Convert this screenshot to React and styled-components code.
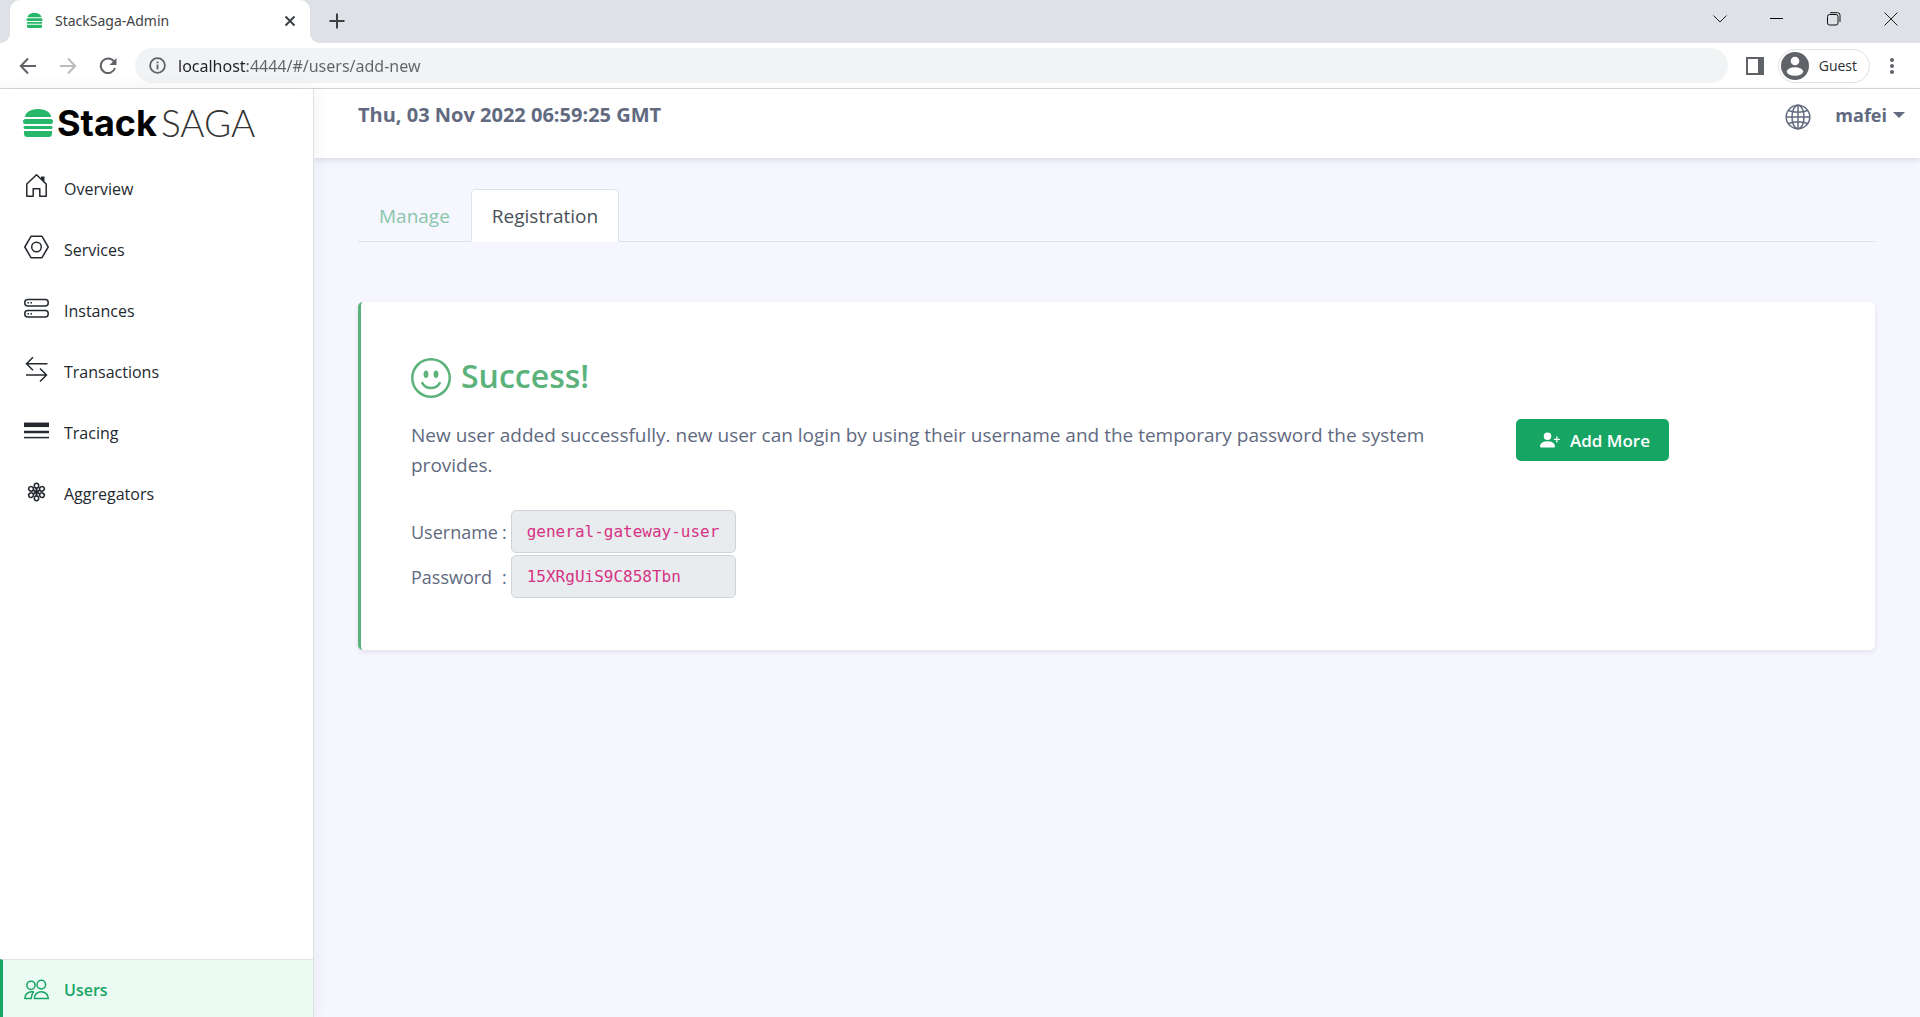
import React from "react";
import styled, { createGlobalStyle } from "styled-components";
import { BsEmojiSmile, BsPersonPlusFill } from "react-icons/bs";

const green = "#17a563";
const softGreen = "#5bb27b";
const slate = "#616a7f";
const ink = "#24292f";

const GlobalStyle = createGlobalStyle`
  *, *::before, *::after { box-sizing: border-box; }
  html, body { margin: 0; }
  body, button, input {
    font-family: "Open Sans", "Noto Sans", sans-serif;
  }
  svg { display: block; flex: none; }
`;

const Window = styled.div`
  min-height: 100vh;
  display: flex;
  flex-direction: column;
  background: #f5f6fe;
`;

/* ---------- browser frame ---------- */

const TabStrip = styled.div`
  height: 43px;
  display: flex;
  background: #dee1e6;
  padding-left: 10px;
`;

const BrowserTab = styled.div`
  position: relative;
  width: 300px;
  display: flex;
  align-items: center;
  gap: 12px;
  padding: 0 12px 2px 16px;
  background: #fff;
  border-radius: 10px 10px 0 0;
  color: #3f4347;
  font-size: 14px;

  &::before, &::after {
    content: "";
    position: absolute;
    bottom: 0;
    width: 10px;
    height: 10px;
  }
  &::before {
    left: -10px;
    background: radial-gradient(circle at 0 0, transparent 10px, #fff 10px);
  }
  &::after {
    right: -10px;
    background: radial-gradient(circle at 100% 0, transparent 10px, #fff 10px);
  }
`;

const TabTitle = styled.span`
  flex: 1;
  font-family: "Noto Sans", sans-serif;
`;

const IconButton = styled.button`
  display: grid;
  place-items: center;
  width: ${(p) => p.$w || 40}px;
  height: ${(p) => p.$h || 34}px;
  padding: 0;
  border: 0;
  background: none;
  color: ${(p) => p.$color || "#5f6368"};
`;

const WindowControls = styled.div`
  display: flex;
  margin-left: auto;
`;

const Toolbar = styled.div`
  height: 46px;
  display: flex;
  align-items: center;
  padding: 0 12px 0 8px;
  background: #fff;
  border-bottom: 1px solid #d4d6d9;
`;

const AddressBar = styled.div`
  flex: 1;
  height: 35px;
  display: flex;
  align-items: center;
  gap: 12px;
  margin: 0 4px 0 7px;
  padding: 0 14px;
  border-radius: 18px;
  background: #f1f3f4;
  color: #5f6368;
`;

const AddressInput = styled.input`
  flex: 1;
  min-width: 0;
  height: 30px;
  padding: 0;
  border: 0;
  outline: 0;
  font-family: "Noto Sans", sans-serif;
  font-size: 16px;
  color: transparent;
  background: linear-gradient(90deg, #202124 69px, #5f6368 69px);
  background-clip: text;
  -webkit-background-clip: text;
`;

const GuestChip = styled.button`
  height: 34px;
  display: flex;
  align-items: center;
  gap: 10px;
  padding: 0 12px 0 2px;
  margin-right: 6px;
  border: 1px solid #dfe1e4;
  border-radius: 17px;
  background: #fff;
  color: #2a2c30;
  font-size: 14px;
`;

/* ---------- application ---------- */

const Shell = styled.div`
  flex: 1;
  display: flex;
`;

const Sidebar = styled.aside`
  position: relative;
  width: 314px;
  flex: none;
  display: flex;
  flex-direction: column;
  background: #fff;
  border-right: 1px solid #dfe0e6;
  box-shadow: 0 0 16px rgba(40, 40, 70, 0.07);
`;

const Brand = styled.a`
  height: 69px;
  display: flex;
  align-items: center;
  gap: 4px;
  padding: 0 0 2px 23px;
  color: #000;
  text-decoration: none;
`;

const BrandBold = styled.span`
  font: 700 36px/40px Inter, sans-serif;
`;

const BrandThin = styled.span`
  color: #333;
  font: 300 37px/40px Lato, sans-serif;
`;

const Menu = styled.nav`
  flex: 1;
  display: flex;
  flex-direction: column;
`;

const MenuLink = styled.a`
  height: 61px;
  display: flex;
  align-items: center;
  gap: 14px;
  padding-left: 24px;
  color: ${ink};
  font-size: 16px;
  text-decoration: none;

  svg { margin-bottom: 5px; }
`;

const UsersLink = styled(MenuLink)`
  height: 58px;
  margin-top: auto;
  padding: 3px 0 0 21px;
  border-top: 1px solid #dfe3e3;
  border-left: 3px solid ${green};
  background: #ebfbf4;
  color: ${green};
  font-weight: 600;
`;

const Content = styled.div`
  flex: 1;
  min-width: 0;
`;

const TopBar = styled.header`
  height: 69px;
  display: flex;
  justify-content: space-between;
  align-items: flex-start;
  padding: 11px 15px 0 44px;
  background: #fff;
  box-shadow: 0 2px 6px rgba(40, 40, 70, 0.14);
  color: ${slate};
  font-size: 20px;
  line-height: 30px;
  font-weight: 700;
`;

const TopActions = styled.div`
  display: flex;
  align-items: flex-end;
  gap: 24px;
  font-size: 18px;
`;

const PlainButton = styled.button`
  display: flex;
  align-items: center;
  gap: 6px;
  padding: 0;
  border: 0;
  background: none;
  color: inherit;
  font-size: inherit;
  font-weight: inherit;
  line-height: inherit;
`;

const Caret = styled.span`
  border: 6px solid transparent;
  border-top-color: currentColor;
  border-bottom: 0;
`;

const Main = styled.main`
  padding: 31px 45px 40px 44px;
`;

const Tabs = styled.nav`
  display: flex;
  border-bottom: 1px solid #dee2e9;
`;

const TabLink = styled.a`
  margin-bottom: -1px;
  padding: 11px 20px 10px;
  border: 1px solid ${(p) => (p.$active ? "#dee2e9" : "transparent")};
  border-bottom-color: ${(p) => (p.$active ? "#fff" : "transparent")};
  border-radius: 5px 5px 0 0;
  background: ${(p) => (p.$active ? "#fff" : "none")};
  color: ${(p) => (p.$active ? "#495057" : "#8ac6ac")};
  font-size: 19px;
  line-height: 30px;
  text-decoration: none;
`;

const Card = styled.section`
  display: flex;
  align-items: flex-start;
  gap: 80px;
  margin-top: 60px;
  padding: 50px 51px 52px 50px;
  border-left: 3px solid ${softGreen};
  border-radius: 5px;
  background: #fff;
  box-shadow: 0 2px 5px rgba(40, 40, 70, 0.1);
  color: ${slate};
`;

const Message = styled.div`
  flex: 0 1 1025px;
`;

const Heading = styled.h2`
  display: flex;
  align-items: center;
  gap: 10px;
  margin: 0 0 20px;
  color: ${softGreen};
  font-size: 32px;
  line-height: 48px;
  font-weight: 600;

  svg { margin-top: 4px; }
`;

const Text = styled.p`
  margin: 0 0 30px;
  font-size: 19px;
  line-height: 30px;
`;

const Credentials = styled.div`
  display: grid;
  grid-template-columns: auto auto 225px;
  justify-content: start;
  align-items: center;
  gap: 2px 4px;
  font-size: 18px;
`;

const Credential = styled.input`
  height: 43px;
  min-width: 0;
  padding: 0 15px;
  border: 1px solid #ced4da;
  border-radius: 5px;
  background: #e9ecef;
  color: #d63384;
  font: 16px "DejaVu Sans Mono", monospace;
`;

const AddButton = styled.button`
  height: 42px;
  display: flex;
  align-items: center;
  gap: 10px;
  margin-top: 67px;
  padding: 0 19px 0 24px;
  border: 0;
  border-radius: 5px;
  background: ${green};
  color: #fff;
  font-size: 17px;
  font-weight: 600;
  white-space: nowrap;
`;

/* ---------- drawings ---------- */

const Burger = ({ width, height }) => (
  <svg width={width} height={height} viewBox="0 0 30 28" fill="#27b768" aria-hidden="true">
    <path d="M2 8C2 4 7 0 15 0s13 4 13 8z" />
    <rect x="0" y="10" width="30" height="5" rx="2.5" />
    <rect x="0.5" y="17" width="29" height="3" rx="1.5" />
    <path d="M1 22h28v2.500q0 3.500-3.500 3.500h-21Q1 28 1 24.500z" />
  </svg>
);

const Line = ({ w = 18, h, box, sw = 1.5, children }) => (
  <svg
    width={w}
    height={h || w}
    viewBox={box || `0 0 ${w} ${h || w}`}
    fill="none"
    stroke="currentColor"
    strokeWidth={sw}
    aria-hidden="true"
  >
    {children}
  </svg>
);

const MenuIcon = ({ children }) => (
  <Line w={26} h={30} sw={1.5}>
    {children}
  </Line>
);

const HomeIcon = () => (
  <MenuIcon>
    <path d="M2.800 13v12.300h6.400v-7.500h6.600v7.500h6.400V13L12.500 3.800z" strokeLinejoin="round" />
    <path d="M17 5.500h3.500V11L17 7.700z" fill="currentColor" stroke="none" />
  </MenuIcon>
);

const ServicesIcon = () => (
  <MenuIcon>
    <path d="M7 4.300h11L24.200 15 18 25.700H7L.800 15z" strokeLinejoin="round" />
    <circle cx="12.500" cy="15" r="4.800" />
  </MenuIcon>
);

const InstancesIcon = () => (
  <MenuIcon>
    <rect x="0.800" y="6.500" width="23.400" height="6.500" rx="3" />
    <rect x="0.800" y="17.500" width="23.400" height="6.500" rx="3" />
    <path d="M3.500 9.800h1.500M6.500 9.800H8M3.500 20.800h1.500M6.500 20.800H8" />
  </MenuIcon>
);

const TransactionsIcon = () => (
  <MenuIcon>
    <path d="M23.500 9.800H2.500M9 3.300 2.500 9.800 9 16.300M2 21h21M16 14.500l6.500 6.500-6.500 6.500" />
  </MenuIcon>
);

const TracingIcon = () => (
  <MenuIcon>
    <path d="M0 9.800h25" strokeWidth="4.500" />
    <path d="M0 17h25" strokeWidth="2.500" />
    <path d="M0 22.600h25" strokeWidth="1.500" />
  </MenuIcon>
);

const AggregatorsIcon = () => (
  <MenuIcon>
    {[0, 60, 120, 180, 240, 300].map((a) => (
      <g key={a} transform={`rotate(${a} 12.500 16)`}>
        <ellipse cx="12.500" cy="9.700" rx="2.200" ry="2.400" />
        <path d="M12.500 12v4" strokeWidth="2" />
      </g>
    ))}
  </MenuIcon>
);

const UsersIcon = () => (
  <MenuIcon>
    <circle cx="7" cy="12.300" r="4.100" />
    <circle cx="17.300" cy="11.600" r="4.300" />
    <path d="M10.300 25.500c0-4 3-6.700 7-6.700s7 2.700 7 6.700z" strokeLinejoin="round" />
    <path d="M9.500 18.800H7.800c-4 0-7 2.700-7 6.700h6.400l.8-4z" strokeLinejoin="round" />
  </MenuIcon>
);

const GlobeIcon = () => (
  <Line w={26} sw={1.5}>
    <circle cx="13" cy="13" r="11.800" />
    <ellipse cx="13" cy="13" rx="6" ry="11.800" />
    <path d="M13 1v24M1 13h24M3.500 6.500c5 2.200 14 2.200 19 0M3.500 19.500c5-2.200 14-2.200 19 0" />
  </Line>
);

const menu = [
  ["Overview", HomeIcon],
  ["Services", ServicesIcon],
  ["Instances", InstancesIcon],
  ["Transactions", TransactionsIcon],
  ["Tracing", TracingIcon],
  ["Aggregators", AggregatorsIcon],
];

function BrowserFrame() {
  return (
    <>
      <TabStrip>
        <BrowserTab>
          <Burger width={17} height={15} />
          <TabTitle>StackSaga-Admin</TabTitle>
          <IconButton $w={16} $h={16} $color="#3c4043" aria-label="Close tab">
            <Line w={12} sw={2}><path d="M1.500 1.500l9 9M10.500 1.500l-9 9" /></Line>
          </IconButton>
        </BrowserTab>
        <IconButton $w={54} $h={42} $color="#3c4043" aria-label="New tab">
          <Line w={16} sw={2}><path d="M8 0.500v15M0.500 8h15" /></Line>
        </IconButton>
        <WindowControls>
          <IconButton $w={57} $h={37} $color="#222" aria-label="Search tabs">
            <Line w={14} h={8} sw={1}><path d="M.500.500 7 7l6.500-6.500" /></Line>
          </IconButton>
          <IconButton $w={57} $h={37} $color="#000" aria-label="Minimize">
            <Line w={13} h={1} sw={1}><path d="M0 .500h13" /></Line>
          </IconButton>
          <IconButton $w={57} $h={37} $color="#111" aria-label="Restore">
            <Line w={14} sw={1}>
              <rect x="0.500" y="2.500" width="10.500" height="10.500" rx="2" />
              <path d="M3 .700h7.500q2.500 0 2.500 2.500V10" />
            </Line>
          </IconButton>
          <IconButton $w={58} $h={37} $color="#222" aria-label="Close">
            <Line w={14} sw={1}><path d="M.500.500l13 13M13.500.500l-13 13" /></Line>
          </IconButton>
        </WindowControls>
      </TabStrip>
      <Toolbar>
        <IconButton aria-label="Back">
          <Line w={18} sw={2}><path d="M17 9H2M9 1.500 1.800 9 9 16.500" /></Line>
        </IconButton>
        <IconButton $color="#babcbe" aria-label="Forward">
          <Line w={18} sw={2}><path d="M1 9h15M9 1.500 16.200 9 9 16.500" /></Line>
        </IconButton>
        <IconButton aria-label="Reload">
          <Line w={18} sw={2}>
            <path d="M15 4.500A7.300 7.300 0 1 0 16 11" />
            <path d="M17.500 1v7h-7z" fill="currentColor" stroke="none" />
          </Line>
        </IconButton>
        <AddressBar>
          <Line w={17}>
            <circle cx="8.500" cy="8.500" r="7.400" strokeWidth="1.800" />
            <path d="M8.500 7.500v5M8.500 4.500v1.800" strokeWidth="1.800" />
          </Line>
          <AddressInput
            aria-label="Address"
            defaultValue="localhost:4444/#/users/add-new"
            spellCheck={false}
          />
        </AddressBar>
        <IconButton $w={46} $h={34} aria-label="Side panel">
          <Line w={18} sw={2}>
            <path d="M1 1h16v16H1z" />
            <path d="M12 1h5v16h-5z" fill="currentColor" stroke="none" />
          </Line>
        </IconButton>
        <GuestChip>
          <svg width="28" height="28" viewBox="0 0 28 28" aria-hidden="true">
            <circle cx="14" cy="14" r="14" fill="#5f6368" />
            <circle cx="14" cy="9" r="4.300" fill="#fff" />
            <ellipse cx="14" cy="19.500" rx="8.200" ry="4.300" fill="#fff" />
          </svg>
          Guest
        </GuestChip>
        <IconButton $w={32} aria-label="Menu">
          <svg width="4" height="18" viewBox="0 0 4 18" fill="currentColor" aria-hidden="true">
            <circle cx="2" cy="3" r="2" />
            <circle cx="2" cy="9" r="2" />
            <circle cx="2" cy="15" r="2" />
          </svg>
        </IconButton>
      </Toolbar>
    </>
  );
}

export default function App() {
  return (
    <Window>
      <GlobalStyle />
      <BrowserFrame />
      <Shell>
        <Sidebar>
          <Brand href="#/">
            <Burger width={30} height={28} />
            <BrandBold>Stack</BrandBold>
            <BrandThin>SAGA</BrandThin>
          </Brand>
          <Menu>
            {menu.map(([label, Icon]) => (
              <MenuLink key={label} href={`#/${label.toLowerCase()}`}>
                <Icon />
                {label}
              </MenuLink>
            ))}
            <UsersLink href="#/users">
              <UsersIcon />
              Users
            </UsersLink>
          </Menu>
        </Sidebar>
        <Content>
          <TopBar>
            <time dateTime="2022-11-03T06:59:25Z">Thu, 03 Nov 2022 06:59:25 GMT</time>
            <TopActions>
              <PlainButton aria-label="Language">
                <GlobeIcon />
              </PlainButton>
              <PlainButton>
                mafei
                <Caret />
              </PlainButton>
            </TopActions>
          </TopBar>
          <Main>
            <Tabs>
              <TabLink href="#/users/manage">Manage</TabLink>
              <TabLink href="#/users/add-new" $active>Registration</TabLink>
            </Tabs>
            <Card>
              <Message>
                <Heading>
                  <BsEmojiSmile size={40} aria-hidden="true" />
                  Success!
                </Heading>
                <Text>
                  New user added successfully. new user can login by using their
                  username and the temporary password the system provides.
                </Text>
                <Credentials>
                  <label htmlFor="username">Username</label>
                  <span>:</span>
                  <Credential id="username" readOnly value="general-gateway-user" />
                  <label htmlFor="password">Password</label>
                  <span>:</span>
                  <Credential id="password" readOnly value="15XRgUiS9C858Tbn" />
                </Credentials>
              </Message>
              <AddButton>
                <BsPersonPlusFill size={20} aria-hidden="true" />
                Add More
              </AddButton>
            </Card>
          </Main>
        </Content>
      </Shell>
    </Window>
  );
}
